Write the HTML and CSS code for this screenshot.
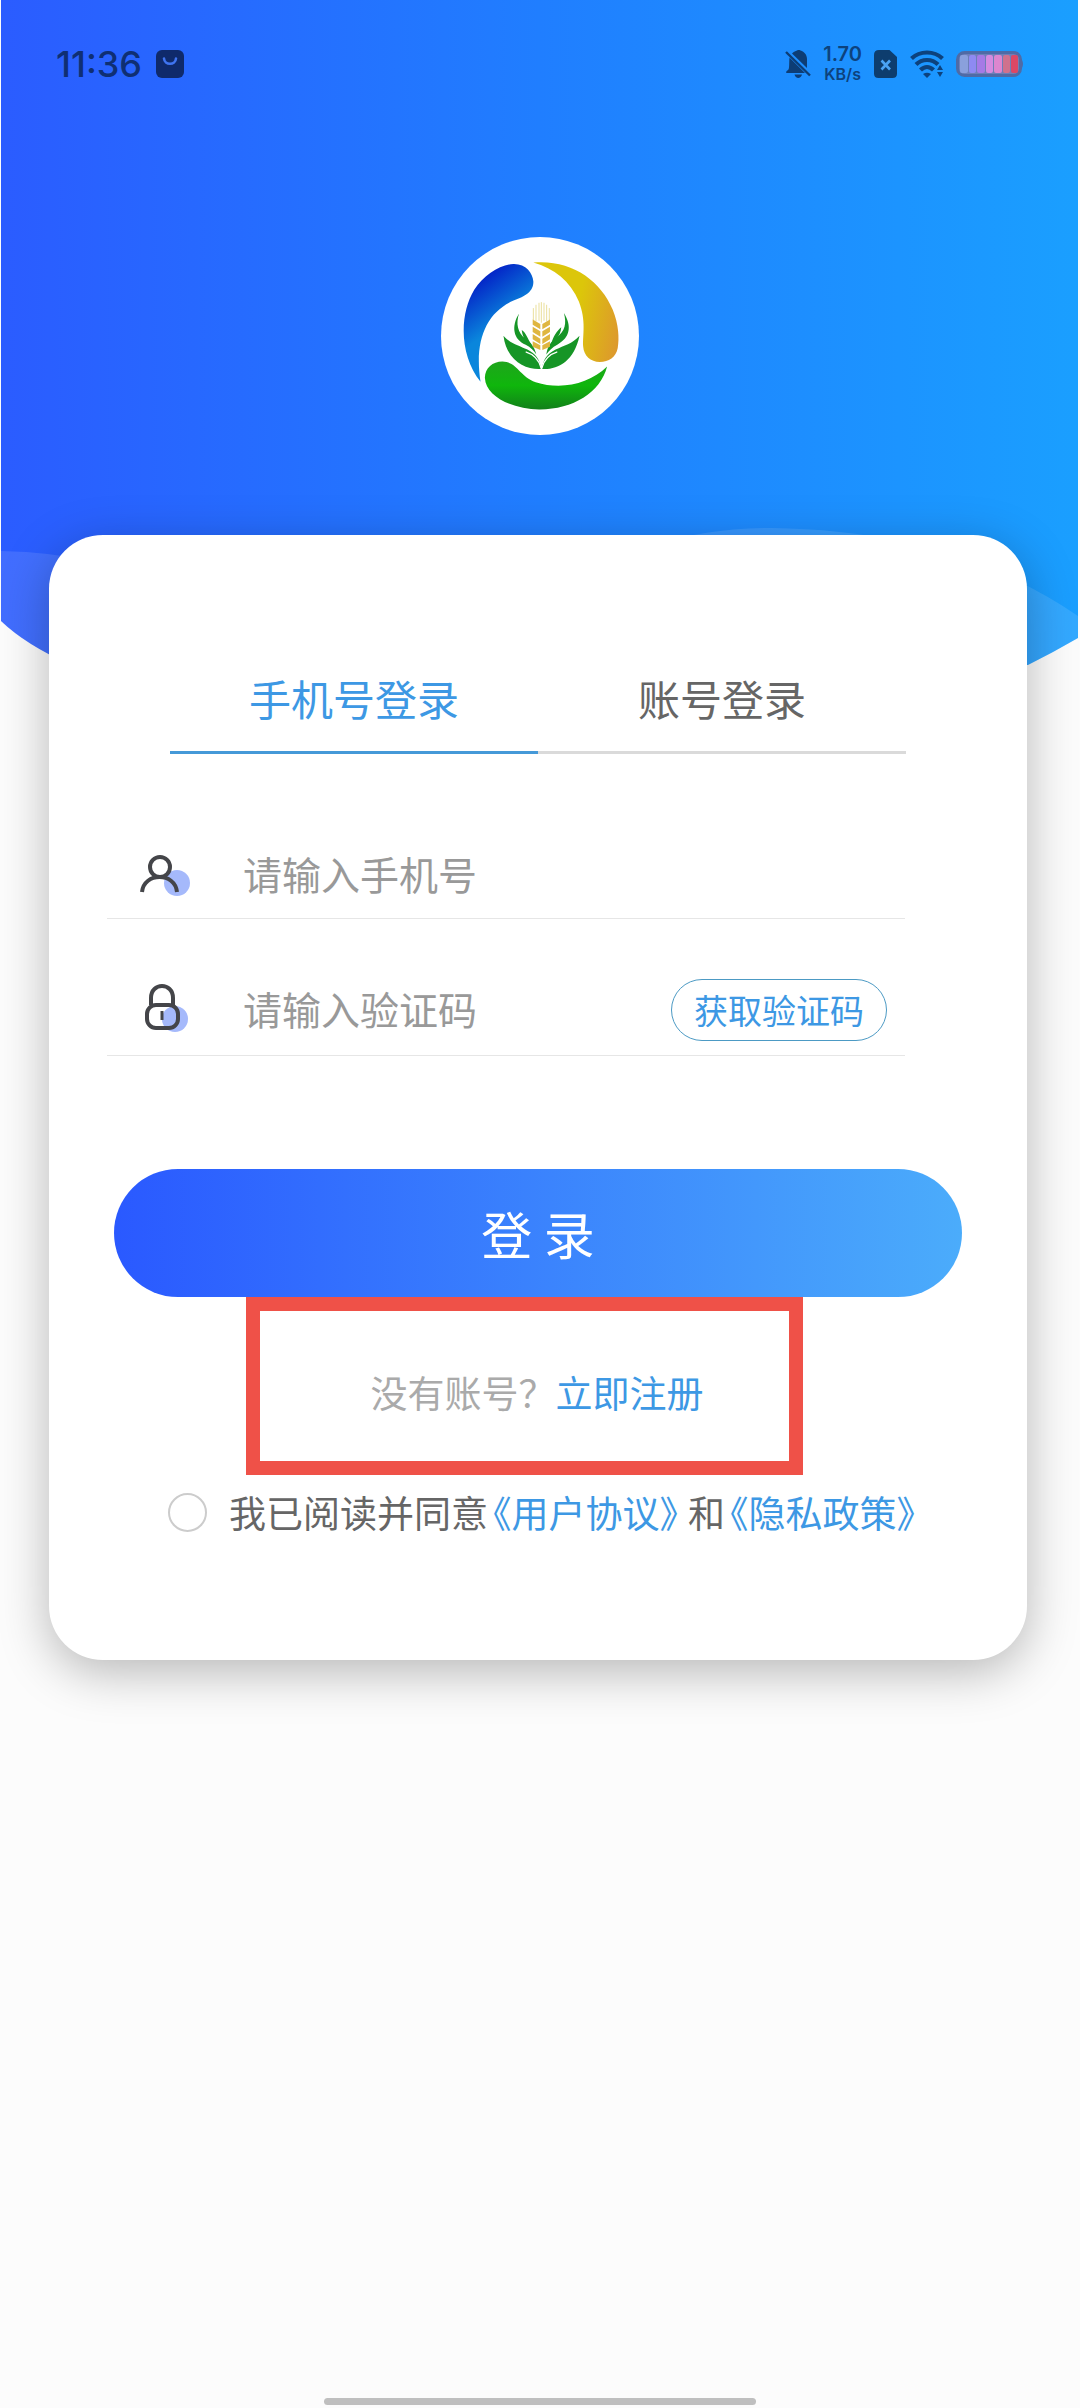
FILE: index.html
```html
<!DOCTYPE html>
<html lang="zh-CN">
<head>
    <meta charset="UTF-8">
    <meta name="viewport" content="width=device-width, initial-scale=1.0">
    <title>登录</title>
    <link rel="stylesheet" href="styles.css">
</head>
<body>
    <svg class="header-bg" viewBox="0 0 1076 665" preserveAspectRatio="none" aria-hidden="true">
        <defs>
            <linearGradient id="bg" x1="0" y1="0" x2="1" y2="0">
                <stop offset="0" stop-color="#2b5cff"/>
                <stop offset="0.5" stop-color="#207eff"/>
                <stop offset="1" stop-color="#1a9fff"/>
            </linearGradient>
            <clipPath id="bgShape">
                <path d="M0 0H1076V638Q1052 652 1026 665H70Q25 645 0 621Z"/>
            </clipPath>
        </defs>
        <g clip-path="url(#bgShape)">
            <rect width="1076" height="665" fill="url(#bg)"/>
            <path d="M0 551Q100 552 220 600H540Q640 528 770 528Q950 530 1076 616V665H0Z" fill="#fff" fill-opacity="0.11"/>
        </g>
    </svg>

    <div class="status-bar">
        <div class="status-left">
            <span class="time">11:36</span>
            <svg width="28" height="28" viewBox="0 0 28 28">
                <rect width="28" height="28" rx="6" fill="#0f2a6b"/>
                <path d="M8 8.500C8.500 15.500 19.500 15.500 20 8.500" fill="none" stroke="#3f74f0" stroke-width="2.600" stroke-linecap="round"/>
            </svg>
        </div>
        <div class="status-right">
            <svg width="26" height="28" viewBox="0 0 26 28" fill="#0d3d75">
                <path d="M7 3.500C9 1.500 10.500 1 12 .5C13 -.3 14.500 -.3 15.500 .5C19.500 1.700 22 5 22 9V18L7 3.500ZM4.500 7.500L20 23H1.500C.8 22 1 21.500 3.500 19.500C4.500 18 4 12 4.500 7.500ZM9.500 24.500H17C16 29 10.500 29 9.500 24.500Z"/>
                <path d="M1 2L25 25.500" stroke="#0d3d75" stroke-width="2.400"/>
            </svg>
            <div class="speed">
                <span class="speed-value">1.70</span>
                <span class="speed-unit">KB/s</span>
            </div>
            <svg width="24" height="28" viewBox="0 0 24 28">
                <path d="M5 0H15.500L23 7V23.500Q23 28 18.500 28H4.500Q0 28 0 23.500V5Q0 0 5 0Z" fill="#0d3d6e"/>
                <path d="M7.500 10.500L16 19.500M16 10.500L7.500 19.500" stroke="#4aa3f5" stroke-width="2.600"/>
            </svg>
            <svg width="34" height="28" viewBox="0 0 34 28" fill="none" stroke="#0d427d" stroke-width="4.200">
                <path d="M1.500 8.500C10 .5 24 .5 32.500 8.500"/>
                <path d="M6 14.500C12 8.500 22 8.500 28 14.500"/>
                <path d="M10.500 20C14.500 16 19.500 16 23.500 20"/>
                <path d="M13 24Q17 21.500 21 24L17 28Z" fill="#0d427d" stroke="none"/>
                <path d="M27 20L30 15L33 20ZM27 22L30 27L33 22Z" fill="#0d427d" stroke="none"/>
            </svg>
            <svg width="68" height="26" viewBox="0 0 68 26">
                <rect x="1.500" y="1.500" width="63" height="23" rx="7" fill="#6d7fb8" stroke="#4f6ba6" stroke-width="3"/>
                <path d="M66 9Q68 13 66 17Z" fill="#4f6ba6"/>
                <rect x="4" y="4" width="8" height="18" rx="2" fill="#8aa0dc"/>
                <rect x="13" y="4" width="7" height="18" rx="2" fill="#8e8af2"/>
                <rect x="21" y="4" width="8" height="18" rx="2" fill="#a57ae6"/>
                <rect x="30" y="4" width="7" height="18" rx="2" fill="#d58be0"/>
                <rect x="38" y="4" width="8" height="18" rx="2" fill="#dd86cf"/>
                <rect x="47" y="4" width="7" height="18" rx="2" fill="#d0718d"/>
                <rect x="55" y="4" width="7" height="18" rx="2" fill="#dc4765"/>
            </svg>
        </div>
    </div>

    <div class="logo">
        <svg viewBox="30 36 596 596" role="img" aria-label="logo">
            <defs>
                <linearGradient id="logoBlue" gradientUnits="userSpaceOnUse" x1="150" y1="170" x2="230" y2="280">
                    <stop offset="0" stop-color="#0428c8"/>
                    <stop offset="1" stop-color="#0a86dc"/>
                </linearGradient>
                <linearGradient id="logoGold" gradientUnits="userSpaceOnUse" x1="440" y1="260" x2="590" y2="290">
                    <stop offset="0" stop-color="#dcc60a"/>
                    <stop offset="1" stop-color="#dd9430"/>
                </linearGradient>
                <linearGradient id="logoGreen" x1="0" y1="0" x2="0" y2="1">
                    <stop offset="0" stop-color="#1fa51c"/>
                    <stop offset="0.5" stop-color="#0fb60c"/>
                    <stop offset="1" stop-color="#12801a"/>
                </linearGradient>
            </defs>
            <circle cx="328" cy="334" r="298" fill="#fff"/>
            <path d="M149 472C85 390 85 270 130 195C160 150 205 120 248 117C285 116 306 143 308 170C309 205 275 217 245 229C165 266 130 350 149 472Z" fill="url(#logoBlue)"/>
            <path d="M308 113C420 103 510 165 547 255C565 300 567 340 562 370C557 398 535 412 508 412C480 411 460 393 458 366C456 330 468 290 445 230C420 170 370 130 308 113Z" fill="url(#logoGold)"/>
            <path d="M530 426C510 505 425 556 325 555C250 554 165 520 162 460C163 430 185 411 215 411C260 412 265 455 315 473C390 497 475 480 530 426Z" fill="url(#logoGreen)"/>
            <g fill="#169526">
                <path d="M331 433C285 436 228 410 218 333C240 358 265 362 290 375C315 388 328 405 331 433Z"/>
                <path d="M334 433C380 436 430 412 447 333C425 358 400 362 375 375C350 388 337 405 334 433Z"/>
                <path d="M265 266C240 305 248 345 285 360C300 368 310 378 317 390C312 368 300 352 285 342C260 325 255 295 265 266Z"/>
                <path d="M400 265C425 305 418 340 380 360C365 368 355 378 347 390C350 366 362 350 376 340C405 320 408 295 400 265Z"/>
                <path d="M273 316C276 345 290 352 303 362C292 345 287 325 273 316Z"/>
                <path d="M392 308C390 335 374 345 362 358C368 335 378 320 392 308Z"/>
            </g>
            <path d="M332 432C325 405 305 388 285 382M333 432C340 405 360 388 380 382" fill="none" stroke="#fff" stroke-width="4"/>
            <path d="M308 250V286M316 240V290M325 234V288M332 232V294M340 234V288M348 240V290M356 250V286" stroke="#eadf9c" stroke-width="3"/>
            <g fill="#dfb640">
                <path d="M306 284L329 298V314L306 300ZM358 284L335 298V314L358 300Z"/>
                <path d="M306 306L329 320V336L306 322ZM358 306L335 320V336L358 322Z"/>
                <path d="M306 328L329 342V358L306 344ZM358 328L335 342V358L358 344Z"/>
                <path d="M306 350L329 362V376L306 366ZM358 350L335 362V376L358 366Z"/>
            </g>
        </svg>
    </div>

    <main class="card">
        <div class="tabs" role="tablist">
            <button type="button" class="tab active" role="tab" aria-selected="true">手机号登录</button>
            <button type="button" class="tab" role="tab" aria-selected="false">账号登录</button>
        </div>

        <form id="loginForm">
            <div class="field">
                <label for="phone" aria-label="手机号">
                    <svg width="54" height="54" viewBox="0 0 54 54" fill="none">
                        <circle cx="38" cy="35" r="13" fill="#a5b9fb"/>
                        <circle cx="21" cy="19" r="10" stroke="#444549" stroke-width="4"/>
                        <path d="M3 44C5 24 36 24 38 44" stroke="#444549" stroke-width="4"/>
                    </svg>
                </label>
                <input type="tel" id="phone" name="phone" placeholder="请输入手机号">
            </div>
            <div class="field">
                <label for="code" aria-label="验证码">
                    <svg width="54" height="54" viewBox="0 0 54 54" fill="none">
                        <circle cx="36" cy="36" r="13" fill="#a5b9fb"/>
                        <path d="M12 22V15C12 -1 34 -1 34 15V22" stroke="#444549" stroke-width="4"/>
                        <rect x="8" y="22" width="31" height="23" rx="9" stroke="#444549" stroke-width="4"/>
                        <path d="M23 28V37" stroke="#444549" stroke-width="3"/>
                    </svg>
                </label>
                <input type="text" id="code" name="code" placeholder="请输入验证码">
                <button type="button" class="code-btn">获取验证码</button>
            </div>

            <button type="submit" class="login-btn">登 录</button>

            <div class="register">
                <span>没有账号？</span><a href="#register">立即注册</a>
            </div>

            <div class="agreement">
                <input type="checkbox" id="agree" name="agree">
                <label for="agree">我已阅读并同意<a href="#terms">《用户协议》</a>和<a href="#privacy">《隐私政策》</a></label>
            </div>
        </form>
    </main>

    <div class="home-bar"></div>
</body>
</html>
```
FILE: styles.css
```css
* {
    box-sizing: border-box;
}
body {
    margin: 0;
    min-height: 100vh;
    display: flex;
    flex-direction: column;
    position: relative;
    background-color: #fcfcfc;
    font-family: "Noto Sans CJK SC", sans-serif;
    color: #666;
}
button, input {
    font-family: inherit;
    margin: 0;
}
a {
    color: #3d98e4;
    text-decoration: none;
}
svg {
    display: block;
}

/* blue header behind everything */
.header-bg {
    position: absolute;
    top: 0;
    left: 1px;
    width: calc(100% - 3px);
    height: 665px;
    z-index: -1;
}

.status-bar {
    display: flex;
    justify-content: space-between;
    align-items: center;
    height: 128px;
    padding: 0 56px;
    font-family: Inter, sans-serif;
    color: #0f2f73;
}
.status-left {
    display: flex;
    align-items: center;
    gap: 14px;
}
.time {
    font-size: 36px;
    font-weight: 500;
}
.status-right {
    display: flex;
    align-items: center;
    gap: 12px;
    color: #0d427d;
}
.speed {
    display: flex;
    flex-direction: column;
    align-items: center;
    font-weight: 600;
}
.speed-value {
    font-size: 20px;
    line-height: 20px;
}
.speed-unit {
    font-size: 16px;
    line-height: 20px;
}

.logo {
    width: 198px;
    margin: 109px auto 100px;
}

.card {
    margin: 0 53px 0 49px;
    padding: 120px 66px 122px 58px;
    background-color: #fff;
    border-radius: 54px;
    box-shadow: 0 12px 50px rgba(0, 0, 0, 0.28);
}
.tabs {
    display: flex;
    margin: 0 55px 0 63px;
}
.tab {
    flex: 1;
    height: 99px;
    padding: 0 0 12px;
    border: none;
    border-bottom: 3px solid #dadada;
    background: none;
    font-size: 42px;
    color: #666;
    cursor: pointer;
}
.tab.active {
    color: #3d98e4;
    border-bottom-color: #4599d8;
}

.field {
    display: flex;
    align-items: center;
    height: 137px;
    padding: 46px 18px 0 32px;
    margin-right: 56px;
    border-bottom: 1px solid #e6e6e6;
}
.field:first-child {
    height: 165px;
    padding-top: 78px;
}
.field input {
    flex: 1;
    min-width: 0;
    margin-left: 50px;
    padding: 0 0 4px;
    border: none;
    outline: none;
    background: none;
    font-size: 39px;
    line-height: 60px;
    color: #333;
}
.field input::placeholder {
    color: #999;
}
.code-btn {
    height: 62px;
    padding: 0 22px 2px;
    border: 1px solid #4c9ac4;
    border-radius: 31px;
    background-color: #fff;
    font-size: 34px;
    color: #3d98e4;
    cursor: pointer;
}

.login-btn {
    display: block;
    width: calc(100% - 6px);
    height: 128px;
    margin: 113px 0 0 7px;
    padding: 0;
    border: none;
    border-radius: 64px;
    background: linear-gradient(90deg, #2a59ff, #4bacfb);
    font-size: 51px;
    color: #fff;
    cursor: pointer;
}

.register {
    position: relative;
    display: flex;
    justify-content: center;
    align-items: center;
    height: 178px;
    padding: 12px 0 0 6px;
    font-size: 37px;
    color: #aaa;
}
/* red frame round the register link */
.register::before {
    content: "";
    position: absolute;
    top: 0;
    bottom: 0;
    left: 139px;
    right: 158px;
    border: 14px solid #ef5148;
    pointer-events: none;
}

.agreement {
    display: flex;
    align-items: center;
    gap: 22px;
    height: 63px;
    margin-left: 61px;
    padding-top: 12px;
    font-size: 37px;
    white-space: nowrap;
}
.agreement input {
    appearance: none;
    flex: none;
    width: 39px;
    height: 39px;
    border: 2px solid #ccc;
    border-radius: 50%;
    background-color: #fff;
}
.agreement input:checked {
    background-color: #3d98e4;
}
.agreement label {
    padding-bottom: 2px;
    font-feature-settings: "halt";
}
.agreement label a {
    padding: 0 10px 0 5px;
}

.home-bar {
    width: 40%;
    height: 7px;
    margin: auto auto 3px;
    border-radius: 4px;
    background-color: #bfbfbf;
}
```
